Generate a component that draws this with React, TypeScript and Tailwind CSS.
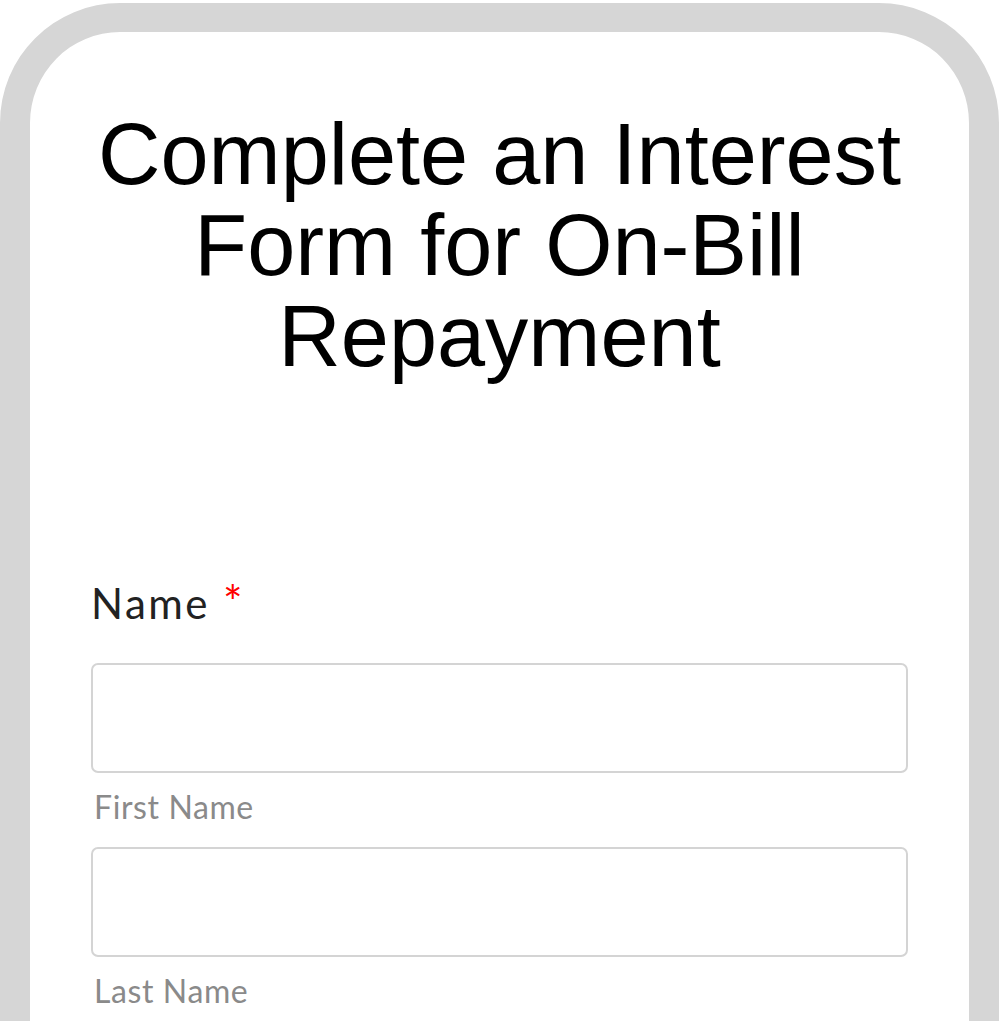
export default function App() {
  return (
    <div className="min-h-screen bg-white pt-[3px]">
      <div className="rounded-[120px] border-[30px] border-t-[29px] border-[#d6d6d6] bg-white px-[31px] pb-[200px] pt-[77px]">
        <h1 className="text-center font-['Liberation_Sans',Arial,sans-serif] text-[86.5px] font-normal leading-[91px] text-black">
          Complete an Interest Form for On-Bill Repayment
        </h1>

        <form className="mt-[196px] px-[30px] font-['Lato','Noto_Sans',sans-serif]">
          <label className="flex items-baseline text-[42px] leading-[48px] tracking-[2.5px] text-[#222]">
            <span>Name</span>
            <span className="ml-[13px] text-[46px] leading-[48px] text-[#ff0000]">*</span>
          </label>

          <div className="mt-[36px]">
            <input
              type="text"
              className="block h-[110px] w-full rounded-[7px] border-2 border-[#d4d4d4] bg-white outline-none"
            />
            <p className="mt-[14px] pl-[3px] text-[32px] leading-[40px] tracking-[0.6px] text-[#8a8a8a]">
              First Name
            </p>
          </div>

          <div className="mt-[20px]">
            <input
              type="text"
              className="block h-[110px] w-full rounded-[7px] border-2 border-[#d4d4d4] bg-white outline-none"
            />
            <p className="mt-[14px] pl-[3px] text-[32px] leading-[40px] tracking-[0.6px] text-[#8a8a8a]">
              Last Name
            </p>
          </div>
        </form>
      </div>
    </div>
  );
}
